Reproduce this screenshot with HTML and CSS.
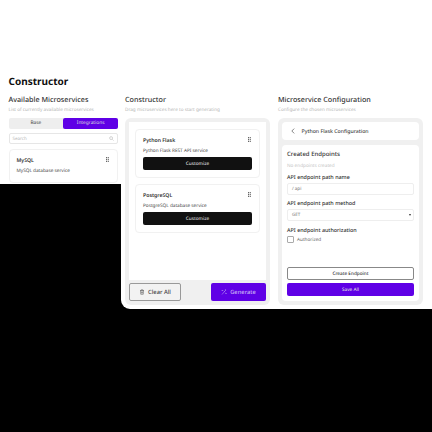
FILE: index.html
```html
<!DOCTYPE html>
<html lang="en">
<head>
<meta charset="utf-8">
<title>Constructor</title>
<link rel="stylesheet" href="styles.css">
</head>
<body>
<main class="page">
  <h1 class="page-title">Constructor</h1>
  <div class="columns">
    <section class="col col-left">
      <h2 class="col-title">Available Microservices</h2>
      <p class="col-sub">List of currently available microservices</p>
      <div class="tabs">
        <div class="tab">Base</div>
        <div class="tab tab-active">Integrations</div>
      </div>
      <div class="search">
        <span>Search</span>
        <svg class="search-icon" viewBox="0 0 12 12"><circle cx="5" cy="5" r="3.5"/><path d="M8 8l3 3"/></svg>
      </div>
      <article class="card card-left">
        <div class="card-head">
          <span class="card-name">MySQL</span>
          <svg class="grip" viewBox="0 0 4 6"><path d="M0 0h1.500v1.300H0zM2.500 0H4v1.300H2.500zM0 2.300h1.500v1.300H0zM2.500 2.300H4v1.300H2.500zM0 4.600h1.500v1.300H0zM2.500 4.600H4v1.300H2.500z"/></svg>
        </div>
        <p class="card-desc">MySQL database service</p>
      </article>
    </section>

    <section class="col col-mid">
      <h2 class="col-title">Constructor</h2>
      <p class="col-sub">Drag microservices here to start generating</p>
      <div class="panel mid-panel">
        <div class="drop">
          <article class="card">
            <div class="card-head">
              <span class="card-name">Python Flask</span>
              <svg class="grip" viewBox="0 0 4 6"><path d="M0 0h1.500v1.300H0zM2.500 0H4v1.300H2.500zM0 2.300h1.500v1.300H0zM2.500 2.300H4v1.300H2.500zM0 4.600h1.500v1.300H0zM2.500 4.600H4v1.300H2.500z"/></svg>
            </div>
            <p class="card-desc">Python Flask REST API service</p>
            <button class="btn-dark">Customize</button>
          </article>
          <article class="card">
            <div class="card-head">
              <span class="card-name">PostgreSQL</span>
              <svg class="grip" viewBox="0 0 4 6"><path d="M0 0h1.500v1.300H0zM2.500 0H4v1.300H2.500zM0 2.300h1.500v1.300H0zM2.500 2.300H4v1.300H2.500zM0 4.600h1.500v1.300H0zM2.500 4.600H4v1.300H2.500z"/></svg>
            </div>
            <p class="card-desc">PostgreSQL database service</p>
            <button class="btn-dark">Customize</button>
          </article>
        </div>
        <div class="actions">
          <button class="btn-clear">
            <svg class="btn-icon" viewBox="0 0 12 12"><path d="M2 3h8M4.500 3V1.500h3V3M3 3l.5 7.500h5L9 3M5 5v3.500M7 5v3.500"/></svg>
            Clear All
          </button>
          <button class="btn-generate">
            <svg class="btn-icon" viewBox="0 0 12 12"><path d="M2 11l5-6M5.500 3.500l3 3M9 1v2.500M7.800 2.200h2.400M2.500 2v2M1.500 3h2M10 8v2M9 9h2"/></svg>
            Generate
          </button>
        </div>
      </div>
    </section>

    <section class="col col-right">
      <h2 class="col-title">Microservice Configuration</h2>
      <p class="col-sub">Configure the chosen microservices</p>
      <div class="panel right-panel">
        <div class="config-head">
          <svg class="back" viewBox="0 0 6 10"><path d="M5 1L1 5l4 4"/></svg>
          <span class="config-title">Python Flask Configuration</span>
        </div>
        <div class="config-body">
          <h3 class="config-h3">Created Endpoints</h3>
          <p class="empty">No endpoints created</p>
          <label class="field-label">API endpoint path name</label>
          <div class="input">/ api</div>
          <label class="field-label">API endpoint path method</label>
          <div class="input select">GET<span class="caret"></span></div>
          <label class="field-label">API endpoint authorization</label>
          <div class="check-row"><span class="check"></span>Authorized</div>
          <div class="config-actions">
            <button class="btn-outline">Create Endpoint</button>
            <button class="btn-save">Save All</button>
          </div>
        </div>
      </div>
    </section>
  </div>
</main>
</body>
</html>
```

FILE: styles.css
```css
* { box-sizing: border-box; }
html, body { margin: 0; height: 100%; background: #000; }
body { font-family: "Noto Sans", "Open Sans", sans-serif; color: #222; overflow: hidden; text-rendering: geometricPrecision; }
button { font-family: inherit; cursor: pointer; text-rendering: geometricPrecision; }
p, h1, h2, h3 { margin: 0; }

.page { width: 432px; }
.page-title {
  background: #fff;
  padding: 74px 0 0 8.500px;
  height: 95px;
  font-size: 10px;
  line-height: 15px;
  font-weight: 700;
  color: #111;
}
.columns { display: flex; align-items: flex-start; }
.col { background: #fff; }
.col-left { width: 121px; height: 89px; padding: 0 3px 0 8.500px; overflow: hidden; }
.col-mid { width: 156px; height: 214px; padding: 0 3px 0 4px; border-bottom-left-radius: 9px; }
.col-right { width: 155px; height: 214px; padding: 0 10px 0 1px; }
.col-title { font-size: 7.200px; line-height: 10px; font-weight: 500; color: #333; }
.col-sub { font-size: 4.650px; line-height: 10px; color: #b5b5b5; white-space: nowrap; margin-bottom: 3px; }

.tabs { display: flex; height: 11px; background: #eee; border-radius: 2px; }
.tab { flex: 1; font-size: 4.800px; line-height: 11px; text-align: center; color: #444; }
.tab-active { background: #5f00e6; color: #ddd; border-radius: 2px; }
.search {
  display: flex; justify-content: space-between; align-items: center;
  height: 11px; margin-top: 4px; padding: 0 3px;
  border: 1px solid #e6e6e6; border-radius: 2px;
  font-size: 4.500px; color: #bbb;
}
.search-icon { width: 5px; height: 5px; fill: none; stroke: #aaa; stroke-width: 1.200; }

.card { border: 1px solid #f1f1f1; border-radius: 4px; background: #fff; padding: 5px 7px 6px; height: 49px; }
.card-left { margin-top: 5px; padding: 5px 7px; height: 34px; }
.card-head { display: flex; justify-content: space-between; align-items: center; height: 9px; }
.card-name { font-size: 5.200px; font-weight: 600; color: #333; }
.grip { width: 3.500px; height: 5.500px; margin-right: 1px; fill: #333; }
.card-desc { font-size: 4.700px; line-height: 8px; margin-top: 3px; color: #444; white-space: nowrap; }

.panel { background: #f0f0f0; border-radius: 6px; height: 187px; }
.mid-panel { padding: 4px 0 0 4px; width: 145px; display: flex; flex-direction: column; }
.drop { background: #fff; width: 137px; height: 158px; padding: 7px 6px 0; display: flex; flex-direction: column; gap: 6px; }
.btn-dark { display: block; width: 100%; height: 13px; padding: 0; background: #111; color: #ddd; border: 0; border-radius: 2px; font-size: 4.700px; font-weight: 500; margin-top: 2px; }
.actions { display: flex; justify-content: space-between; width: 137px; margin-top: 3px; }
.btn-clear, .btn-generate {
  display: flex; align-items: center; justify-content: center; gap: 3px;
  height: 18px; padding: 0; border-radius: 2px; font-size: 5.800px; font-weight: 500;
}
.btn-clear { width: 52px; background: #f2f2f2; border: 1px solid #999; color: #444; }
.btn-generate { width: 55px; background: #5f00e6; border: 0; color: #c9b3f5; }
.btn-icon { width: 6px; height: 6px; fill: none; stroke: currentColor; stroke-width: 1; }

.right-panel { width: 145px; padding: 4px; display: flex; flex-direction: column; gap: 5px; }
.config-head { display: flex; align-items: center; height: 18px; padding-left: 9px; background: #fff; border-radius: 4px; }
.back { width: 4px; height: 6px; fill: none; stroke: #333; stroke-width: 1; margin-right: 6.500px; }
.config-title { font-size: 5.200px; font-weight: 500; color: #444; }
.config-body { background: #fff; border-radius: 4px; height: 156px; padding: 4px 5px 5px; display: flex; flex-direction: column; }
.config-h3 { font-size: 6px; line-height: 10px; font-weight: 500; color: #333; }
.empty { font-size: 4.700px; line-height: 8px; margin-top: 3px; color: #c4c4c4; }
.field-label { display: block; font-size: 5.400px; line-height: 8px; margin-top: 3px; font-weight: 500; color: #333; }
.input { height: 12px; margin-top: 2px; padding-left: 4px; border: 1px solid #eee; border-radius: 2px; font-size: 4.500px; line-height: 10px; color: #777; }
.select { position: relative; margin-bottom: 1px; }
.field-label + .input + .field-label { margin-top: 4px; }
.caret { position: absolute; right: 2px; top: 4px; width: 0; height: 0; border: 1.500px solid transparent; border-top: 2px solid #333; border-bottom: 0; }
.check-row { display: flex; align-items: center; gap: 3px; margin-top: 2px; font-size: 4.700px; color: #666; }
.check { width: 7px; height: 7px; border: 1px solid #aaa; border-radius: 1px; background: #fff; }
.config-actions { margin-top: auto; display: flex; flex-direction: column; gap: 3px; }
.btn-outline, .btn-save { height: 13px; padding: 0; border-radius: 2px; font-size: 4.700px; font-weight: 500; }
.btn-outline { background: #fff; border: 1px solid #888; color: #333; }
.btn-save { background: #5f00e6; border: 0; color: #ddd; }
```
